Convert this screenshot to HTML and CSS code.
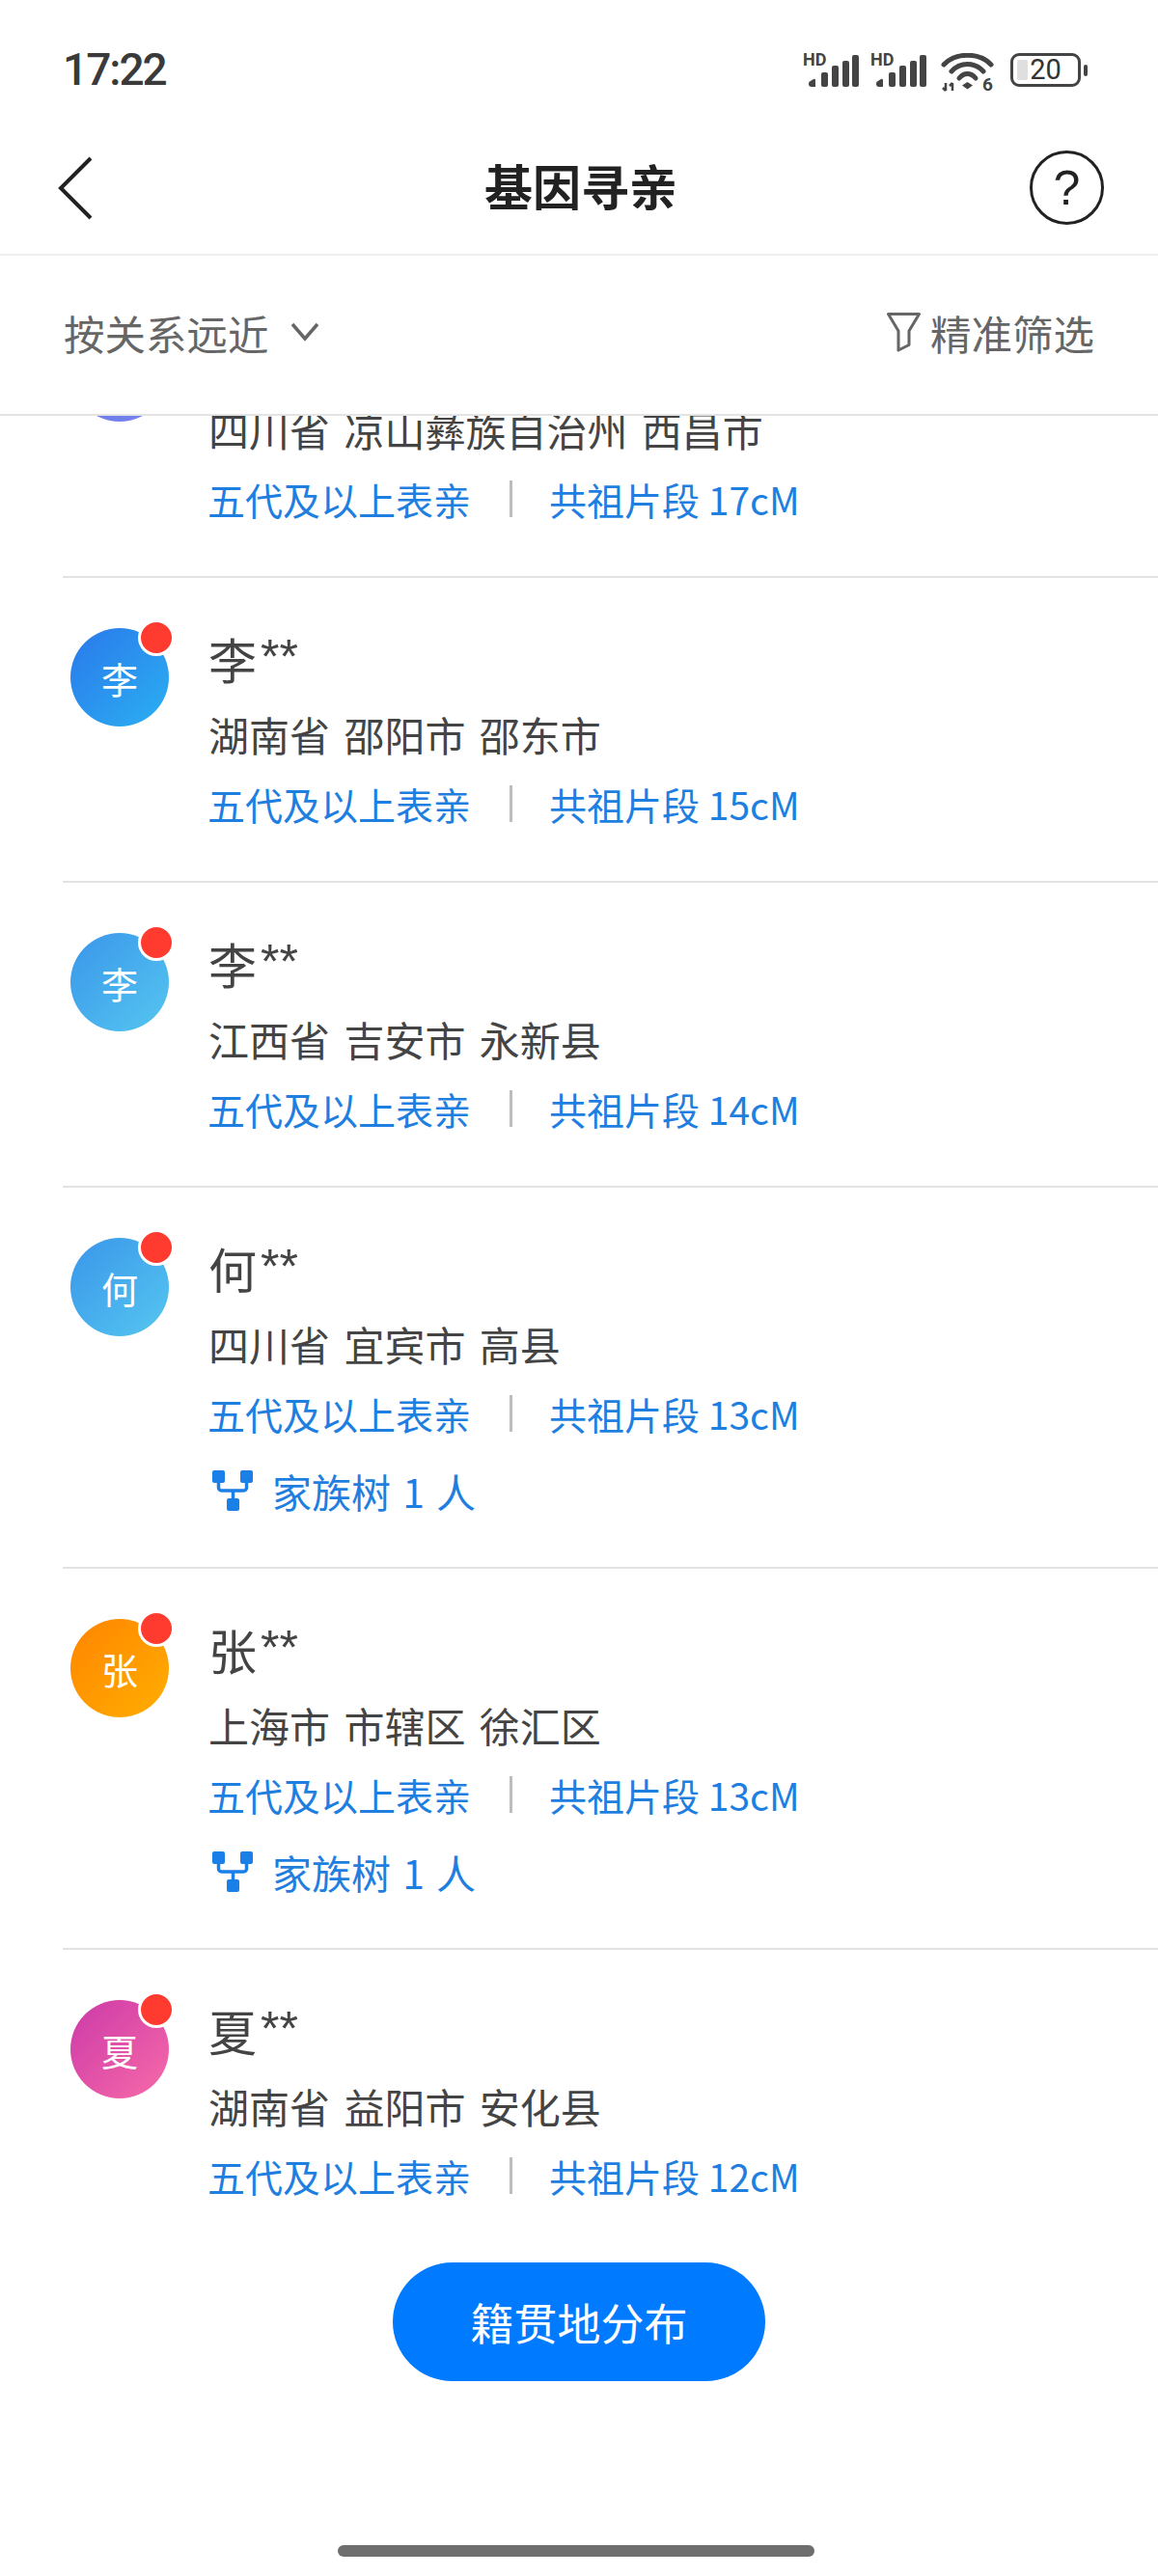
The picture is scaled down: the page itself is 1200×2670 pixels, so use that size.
FILE: index.html
```html
<!DOCTYPE html>
<html lang="zh-CN">
<head>
  <meta charset="UTF-8" />
  <meta name="viewport" content="width=device-width, initial-scale=1.0"/>
  <title>基因寻亲</title>
  <link rel="stylesheet" href="styles.css">
</head>
<body>
  <div class="page">
    <div class="status-bar">
      <span class="time">17:22</span>
      <div class="status-icons">
        <div class="signal">
          <span class="hd">HD</span>
          <svg width="58" height="35" viewBox="0 0 58 35"><g fill="#444"><path d="M7 29.500l4-2.500a1.500 1.500 0 0 1 2 1.300V35H9a3 3 0 0 1-3-3c0-1 .4-2 1-2.500z"/><rect x="19" y="20" width="7" height="15" rx="2"/><rect x="30" y="13" width="7" height="22" rx="2"/><rect x="41" y="8" width="7" height="27" rx="2"/><rect x="51" y="2" width="7" height="33" rx="2"/></g></svg>
        </div>
        <div class="signal">
          <span class="hd">HD</span>
          <svg width="58" height="35" viewBox="0 0 58 35"><g fill="#444"><path d="M7 29.500l4-2.500a1.500 1.500 0 0 1 2 1.300V35H9a3 3 0 0 1-3-3c0-1 .4-2 1-2.500z"/><rect x="19" y="20" width="7" height="15" rx="2"/><rect x="30" y="13" width="7" height="22" rx="2"/><rect x="41" y="8" width="7" height="27" rx="2"/><rect x="51" y="2" width="7" height="33" rx="2"/></g></svg>
        </div>
        <svg class="wifi" width="56" height="42" viewBox="0 0 56 42">
          <g fill="none" stroke="#444" stroke-width="5" stroke-linecap="round">
            <path d="M3 12C15 -1 40 -1 52 12"/>
            <path d="M11 19C20 9 35 9 44 19"/>
            <path d="M19 26C24 20 31 20 36 26"/>
          </g>
          <path d="M22 33.500l5.500-3.500 5.500 3.500-5.500 4z" fill="#444"/>
          <path d="M5 31v8M2 36l3 3M12 39v-8M9 34l3-3" fill="none" stroke="#444" stroke-width="2.500"/>
          <text x="43" y="39" class="wifi-six">6</text>
        </svg>
        <div class="battery-wrap">
          <div class="battery"><span class="battery-fill"></span><span class="battery-num">20</span></div>
          <span class="battery-nub"></span>
        </div>
      </div>
    </div>

    <header class="nav">
      <div class="nav-side">
        <svg width="36" height="66" viewBox="0 0 36 66"><path d="M34 2L3 33l31 31" fill="none" stroke="#222" stroke-width="4"/></svg>
      </div>
      <h1 class="title">基因寻亲</h1>
      <div class="nav-side nav-right"><div class="help">?</div></div>
    </header>

    <div class="filter-bar">
      <div class="sort">
        <span>按关系远近</span>
        <svg width="30" height="20" viewBox="0 0 30 20"><path d="M2 2l13 15L28 2" fill="none" stroke="#666" stroke-width="3.500"/></svg>
      </div>
      <div class="filter">
        <svg width="37" height="42" viewBox="0 0 37 42"><path d="M2.500 2.500h32L24 20v14.500l-11 5.500V20z" fill="none" stroke="#666" stroke-width="3" stroke-linejoin="round"/></svg>
        <span>精准筛选</span>
      </div>
    </div>

    <div class="scroller">
      <ul class="list">
        <li class="row">
          <div class="avatar av-purple"></div>
          <div class="info">
            <div class="name"></div>
            <div class="addr">四川省 凉山彝族自治州 西昌市</div>
            <div class="meta"><span>五代及以上表亲</span><i class="sep"></i><span>共祖片段 17cM</span></div>
          </div>
        </li>
        <li class="row">
          <div class="avatar av-blue">李</div>
          <div class="info">
            <div class="name">李<span class="stars">**</span></div>
            <div class="addr">湖南省 邵阳市 邵东市</div>
            <div class="meta"><span>五代及以上表亲</span><i class="sep"></i><span>共祖片段 15cM</span></div>
          </div>
        </li>
        <li class="row">
          <div class="avatar av-sky">李</div>
          <div class="info">
            <div class="name">李<span class="stars">**</span></div>
            <div class="addr">江西省 吉安市 永新县</div>
            <div class="meta"><span>五代及以上表亲</span><i class="sep"></i><span>共祖片段 14cM</span></div>
          </div>
        </li>
        <li class="row">
          <div class="avatar av-sky">何</div>
          <div class="info">
            <div class="name">何<span class="stars">**</span></div>
            <div class="addr">四川省 宜宾市 高县</div>
            <div class="meta"><span>五代及以上表亲</span><i class="sep"></i><span>共祖片段 13cM</span></div>
            <div class="tree">
              <svg width="42" height="42" viewBox="0 0 42 42"><g fill="#1a7fe6"><rect x="0" y="0" width="13" height="13" rx="2"/><rect x="29" y="0" width="13" height="13" rx="2"/><rect x="15" y="29" width="13" height="13" rx="2"/></g><path d="M6.500 12v6a3 3 0 0 0 3 3h23a3 3 0 0 0 3-3v-6M21.500 21v9" fill="none" stroke="#1a7fe6" stroke-width="3.500"/></svg>
              <span>家族树 1 人</span>
            </div>
          </div>
        </li>
        <li class="row">
          <div class="avatar av-orange">张</div>
          <div class="info">
            <div class="name">张<span class="stars">**</span></div>
            <div class="addr">上海市 市辖区 徐汇区</div>
            <div class="meta"><span>五代及以上表亲</span><i class="sep"></i><span>共祖片段 13cM</span></div>
            <div class="tree">
              <svg width="42" height="42" viewBox="0 0 42 42"><g fill="#1a7fe6"><rect x="0" y="0" width="13" height="13" rx="2"/><rect x="29" y="0" width="13" height="13" rx="2"/><rect x="15" y="29" width="13" height="13" rx="2"/></g><path d="M6.500 12v6a3 3 0 0 0 3 3h23a3 3 0 0 0 3-3v-6M21.500 21v9" fill="none" stroke="#1a7fe6" stroke-width="3.500"/></svg>
              <span>家族树 1 人</span>
            </div>
          </div>
        </li>
        <li class="row last">
          <div class="avatar av-pink">夏</div>
          <div class="info">
            <div class="name">夏<span class="stars">**</span></div>
            <div class="addr">湖南省 益阳市 安化县</div>
            <div class="meta"><span>五代及以上表亲</span><i class="sep"></i><span>共祖片段 12cM</span></div>
          </div>
        </li>
      </ul>
    </div>

    <div class="actions">
      <button type="button" class="map-btn">籍贯地分布</button>
    </div>
    <div class="home-bar"></div>
  </div>
</body>
</html>
```

FILE: styles.css
```css
* {
  box-sizing: border-box;
}

body {
  margin: 0;
  background: #ffffff;
  font-family: "Noto Sans CJK SC", "Noto Sans", sans-serif;
  color: #444;
}

.page {
  display: flex;
  flex-direction: column;
  width: 1200px;
  height: 2670px;
  overflow: hidden;
}

.status-bar {
  display: flex;
  justify-content: space-between;
  align-items: center;
  height: 130px;
  padding: 14px 73px 0 65px;
}

.time {
  font-family: Roboto, sans-serif;
  font-size: 46px;
  font-weight: 500;
  letter-spacing: -2px;
  color: #3a3a3a;
}

.status-icons {
  display: flex;
  align-items: flex-start;
  gap: 12px;
  margin-top: 8px;
}

.signal {
  position: relative;
  width: 58px;
  height: 35px;
}

.hd {
  position: absolute;
  left: 0;
  top: -1px;
  font-family: Roboto, sans-serif;
  font-size: 18px;
  line-height: 16px;
  font-weight: 700;
  color: #444;
}

.signal svg {
  display: block;
}

.wifi {
  margin-left: 3px;
}

.wifi-six {
  font-family: Roboto, sans-serif;
  font-size: 19px;
  font-weight: 700;
  fill: #444;
}

.battery-wrap {
  display: flex;
  align-items: center;
  gap: 3px;
  margin-left: 4px;
}

.battery {
  display: flex;
  align-items: center;
  justify-content: center;
  position: relative;
  width: 73px;
  height: 35px;
  border: 3px solid #444;
  border-radius: 9px;
}

.battery-fill {
  position: absolute;
  left: 4px;
  top: 4px;
  bottom: 4px;
  width: 11px;
  background: #dfdfdf;
  border-radius: 2px;
}

.battery-num {
  position: relative;
  font-family: Roboto, sans-serif;
  font-size: 29px;
  line-height: 29px;
  color: #333;
}

.battery-nub {
  width: 4px;
  height: 12px;
  background: #444;
  border-radius: 2px;
}

.nav {
  display: flex;
  align-items: center;
  justify-content: space-between;
  height: 135px;
  padding: 0 56px 4px 60px;
  border-bottom: 2px solid #eeeeee;
}

/* same width on both sides keeps the title on the page centre */
.nav-side {
  display: flex;
  flex: 0 0 84px;
}

.nav-right {
  justify-content: flex-end;
}

.title {
  flex: 1;
  margin: 0 0 8px;
  text-align: center;
  font-size: 50px;
  line-height: 64px;
  font-weight: 700;
  color: #222;
}

.help {
  display: flex;
  align-items: center;
  justify-content: center;
  width: 77px;
  height: 77px;
  border: 3px solid #222;
  border-radius: 50%;
  font-family: "Liberation Sans", sans-serif;
  font-size: 50px;
  line-height: 1;
  color: #222;
}

.filter-bar {
  display: flex;
  justify-content: space-between;
  align-items: center;
  height: 166px;
  padding: 0 66px 6px 66px;
  border-bottom: 2px solid #e4e4e4;
  font-size: 42.5px;
  color: #666;
}

.sort,
.filter {
  display: flex;
  align-items: center;
}

.sort {
  gap: 22px;
}

.filter {
  gap: 9px;
}

.scroller {
  height: 1905px;
  overflow: hidden;
}

.list {
  list-style: none;
  margin: -148px 0 0;
  padding: 0 0 0 65px;
}

.row {
  display: flex;
  padding: 52px 0 48px 8px;
  border-bottom: 2px solid #e2e2e2;
}

.row.last {
  border-bottom: 0;
}

.avatar {
  position: relative;
  flex: none;
  display: flex;
  align-items: center;
  justify-content: center;
  width: 102px;
  height: 102px;
  border-radius: 50%;
  font-size: 38px;
  color: #fff;
}

/* unread dot, ringed in white so it cuts into the circle */
.avatar::after {
  content: "";
  position: absolute;
  top: -9px;
  right: -6px;
  width: 32px;
  height: 32px;
  background: #ff3b30;
  border: 3px solid #fff;
  border-radius: 50%;
}

.av-purple { background: linear-gradient(135deg, #5f6fe6, #7a86ee); }
.av-blue { background: linear-gradient(135deg, #2a78ea, #2bb0f2); }
.av-sky { background: linear-gradient(135deg, #3a96ea, #55c6f0); }
.av-orange { background: linear-gradient(135deg, #ff8500, #ffae00); }
.av-pink { background: linear-gradient(135deg, #cc3aa8, #f76aa8); }

.info {
  margin: -2px 0 0 41px;
}

.name {
  height: 64px;
  font-size: 50px;
  line-height: 64px;
}

.stars {
  margin-left: 4px;
  font-family: "Liberation Sans", sans-serif;
  font-size: 50px;
  vertical-align: 6px;
}

.addr {
  margin-top: 16px;
  height: 64px;
  font-size: 42px;
  line-height: 64px;
  word-spacing: 5px;
}

.meta {
  display: flex;
  align-items: center;
  margin: 8px 0 0 -1px;
  height: 64px;
  font-size: 39px;
  color: #1f7fe0;
}

.sep {
  width: 3px;
  height: 38px;
  margin: 0 38px 0 40px;
  background: #bdbdbd;
}

.tree {
  display: flex;
  align-items: center;
  gap: 20px;
  margin-top: 16px;
  padding-left: 4px;
  height: 63px;
  font-size: 41px;
  word-spacing: 3px;
  color: #1f7fe0;
}

.actions {
  display: flex;
  justify-content: center;
  padding-top: 9px;
}

.map-btn {
  width: 386px;
  height: 123px;
  border: 0;
  border-radius: 62px;
  background: #007aff;
  font-family: inherit;
  font-size: 45px;
  color: #fff;
}

.home-bar {
  align-self: center;
  width: 494px;
  height: 12px;
  margin: 170px 7px 0 0;
  background: #6e6e6e;
  border-radius: 6px;
}
```
